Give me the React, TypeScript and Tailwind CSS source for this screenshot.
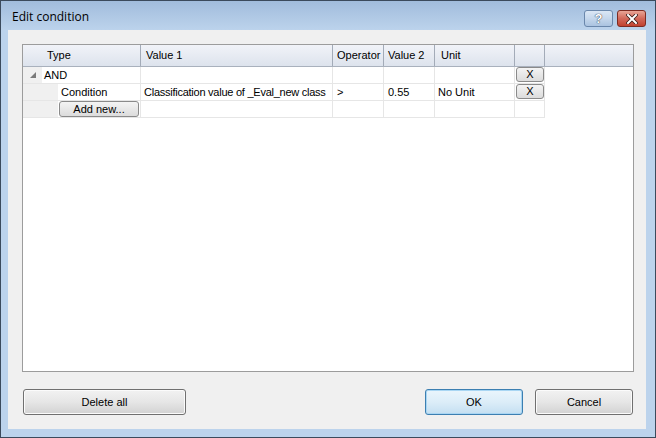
function XButton() {
  return (
    <div className="mt-0 ml-[1px] w-[28px] h-[15px] rounded-[3px] border border-[#8a8a8a] bg-gradient-to-b from-[#f4f4f4] to-[#dcdcdc] flex items-center justify-center leading-none text-[11px]">
      X
    </div>
  );
}

function WinButton({ label, width, primary }: { label: string; width: string; primary?: boolean }) {
  return (
    <div
      className={
        primary
          ? `${width} h-[26px] rounded-[3px] border border-[#3c7fb1] bg-gradient-to-b from-[#eaf5fc] via-[#dcedf8] to-[#c4dff1] flex items-center justify-center shadow-[inset_0_0_0_1px_#a9d6f3]`
          : `${width} h-[26px] rounded-[3px] border border-[#707070] bg-gradient-to-b from-[#f2f2f2] via-[#e6e6e6] to-[#d2d2d2] flex items-center justify-center shadow-[inset_0_0_0_1px_#fbfbfb]`
      }
    >
      {label}
    </div>
  );
}

export default function App() {
  return (
    <div className="w-[656px] h-[438px] border border-[#3b4a5c] bg-[#bcd3ec] flex flex-col font-['Liberation_Sans',Arial,sans-serif] text-[11px] text-black">
      {/* Title bar */}
      <div className="h-[29px] flex items-start bg-gradient-to-b from-[#a1bcdc] to-[#bcd3ec]">
        <span className="ml-[11px] mt-[8px] text-[12px] leading-[16px] font-['Open_Sans','Noto_Sans',sans-serif]">
          Edit condition
        </span>
        <div className="ml-auto mt-[9px] mr-[9px] flex gap-[4px]">
          <div className="w-[29px] h-[17px] rounded-[3px] border border-[#6a87ab] bg-gradient-to-b from-[#dbe7f5] via-[#c5d7ec] to-[#aac3e0] flex items-center justify-center text-white font-bold text-[13px] leading-none [text-shadow:0_0_1px_#2b3a4d,0_0_1px_#2b3a4d]">
            ?
          </div>
          <div className="w-[29px] h-[17px] rounded-[3px] border border-[#7d2b22] bg-gradient-to-b from-[#e8a597] via-[#d2685a] to-[#c1412f] flex items-center justify-center">
            <svg width="12" height="10" viewBox="0 0 12 10">
              <path d="M2 1 L10 9 M10 1 L2 9" stroke="#3a1a16" strokeWidth="3.6" strokeLinecap="square" />
              <path d="M2 1 L10 9 M10 1 L2 9" stroke="#ffffff" strokeWidth="2" strokeLinecap="square" />
            </svg>
          </div>
        </div>
      </div>

      {/* Client area */}
      <div className="ml-[7px] w-[638px] h-[399px] bg-[#f0f0f0] pt-[14px] pl-[14px] flex flex-col">
        {/* Grid */}
        <div className="w-[612px] h-[328px] border border-[#9c9c9c] bg-white flex flex-col">
          {/* Header */}
          <div className="h-[22px] flex border-b border-[#a9b1bd] bg-gradient-to-b from-[#f1f3f8] to-[#dde3ed]">
            <div className="w-[118px] border-r border-[#a3abb8] pl-[24px] flex items-center">Type</div>
            <div className="w-[192px] border-r border-[#a3abb8] pl-[5px] flex items-center">Value 1</div>
            <div className="w-[51px] border-r border-[#a3abb8] pl-[4px] flex items-center">Operator</div>
            <div className="w-[51px] border-r border-[#a3abb8] pl-[4px] flex items-center">Value 2</div>
            <div className="w-[80px] border-r border-[#a3abb8] pl-[6px] flex items-center">Unit</div>
            <div className="w-[30px] border-r border-[#a3abb8]" />
            <div className="w-[88px]" />
          </div>

          {/* AND row */}
          <div className="h-[17px] flex">
            <div className="w-[118px] flex border-r border-b border-[#e6e6e6]">
              <div className="w-[19px] bg-[#f0f0f0] flex items-center pl-[7px]">
                <svg width="6" height="6" viewBox="0 0 6 6">
                  <polygon points="6,0 6,6 0,6" fill="#7a7a7a" />
                </svg>
              </div>
              <div className="flex-1 flex items-center pl-[2px]">AND</div>
            </div>
            <div className="w-[192px] border-r border-b border-[#e6e6e6]" />
            <div className="w-[51px] border-r border-b border-[#e6e6e6]" />
            <div className="w-[51px] border-r border-b border-[#e6e6e6]" />
            <div className="w-[80px] border-r border-b border-[#e6e6e6]" />
            <div className="w-[30px] border-r border-b border-[#e6e6e6]">
              <XButton />
            </div>
          </div>

          {/* Condition row */}
          <div className="h-[17px] flex">
            <div className="w-[118px] flex border-r border-b border-[#e6e6e6]">
              <div className="w-[35px] bg-[#f0f0f0]" />
              <div className="flex-1 flex items-center pl-[3px]">Condition</div>
            </div>
            <div className="w-[192px] border-r border-b border-[#e6e6e6] flex items-center pl-[3px] whitespace-nowrap tracking-[-0.25px]">
              Classification value of _Eval_new class
            </div>
            <div className="w-[51px] border-r border-b border-[#e6e6e6] flex items-center pl-[4px]">&gt;</div>
            <div className="w-[51px] border-r border-b border-[#e6e6e6] flex items-center pl-[4px]">0.55</div>
            <div className="w-[80px] border-r border-b border-[#e6e6e6] flex items-center pl-[3px]">No Unit</div>
            <div className="w-[30px] border-r border-b border-[#e6e6e6]">
              <XButton />
            </div>
          </div>

          {/* Add new row */}
          <div className="h-[17px] flex">
            <div className="w-[118px] flex border-r border-b border-[#e6e6e6]">
              <div className="w-[35px] bg-[#f0f0f0]" />
              <div className="ml-[1px] w-[80px] h-[16px] rounded-[3px] border border-[#8a8a8a] bg-gradient-to-b from-[#f4f4f4] to-[#dcdcdc] flex items-center justify-center">
                Add new...
              </div>
            </div>
            <div className="w-[192px] border-r border-b border-[#e6e6e6]" />
            <div className="w-[51px] border-r border-b border-[#e6e6e6]" />
            <div className="w-[51px] border-r border-b border-[#e6e6e6]" />
            <div className="w-[80px] border-r border-b border-[#e6e6e6]" />
            <div className="w-[30px] border-r border-b border-[#e6e6e6]" />
          </div>
        </div>

        {/* Buttons */}
        <div className="mt-[17px] flex">
          <div className="ml-[1px]">
            <WinButton label="Delete all" width="w-[163px]" />
          </div>
          <div className="ml-auto mr-[13px] flex gap-[12px]">
            <WinButton label="OK" width="w-[98px]" primary />
            <WinButton label="Cancel" width="w-[98px]" />
          </div>
        </div>
      </div>
    </div>
  );
}
